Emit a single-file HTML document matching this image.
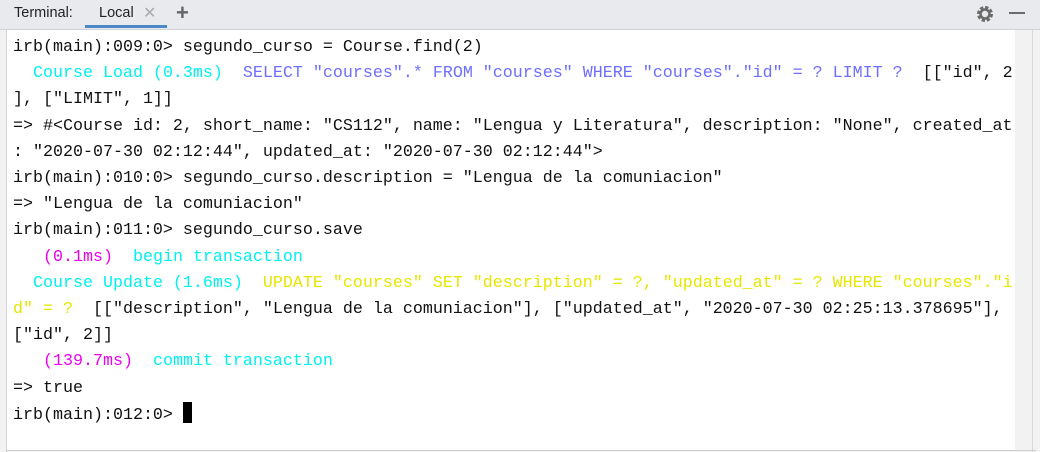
<!DOCTYPE html>
<html><head><meta charset="utf-8"><style>
html,body{margin:0;padding:0;width:1040px;height:452px;overflow:hidden;background:#f2f2f2;font-family:"Liberation Sans",sans-serif}
.hdr{position:absolute;left:0;top:0;width:1040px;height:29px;background:#e8eaee;border-bottom:1px solid #cfd2d6}
.hdr .t{position:absolute;left:14px;top:5px;font-size:14.5px;color:#222}
.hdr .tab{position:absolute;left:99px;top:5px;font-size:14.5px;color:#222}
.hdr .x{position:absolute;left:143px;top:3px;font-size:16px;color:#aaa}
.hdr .ul{position:absolute;left:85px;top:25px;width:82px;height:3px;background:#4a88c7}
.hdr .plus{position:absolute;left:176px;top:0px;font-size:22px;color:#666;font-weight:bold}
.left{position:absolute;left:6px;top:30px;width:1px;height:422px;background:#d4d4d4}
.main{position:absolute;left:7px;top:30px;width:1008px;height:420px;background:#fff}
.sb{position:absolute;left:1032px;top:30px;width:1px;height:422px;background:#d8d8d8}
.bot{position:absolute;left:6px;top:450px;width:1030px;height:1px;background:#d0d0d0}
pre{position:absolute;left:13px;top:35px;margin:0;font-family:"Liberation Mono",monospace;font-size:16.67px;line-height:26.2px;color:#111}
.c{color:#00f0f0}.b{color:#6e6eff}.y{color:#e6e600}.m{color:#f000f0}
.cur{display:inline-block;width:9px;height:21px;background:#000;vertical-align:-4px}
</style></head><body>
<div class="hdr"><span class="t">Terminal:</span><span class="tab">Local</span><span class="x">✕</span><div class="ul"></div><span class="plus">+</span>
<svg style="position:absolute;left:975px;top:4px" width="20" height="20" viewBox="0 0 20 20"><circle cx="10" cy="10" r="6" fill="none" stroke="#6b6b6b" stroke-width="4" stroke-dasharray="3 1.7"/><circle cx="10" cy="10" r="4.5" fill="none" stroke="#6b6b6b" stroke-width="2.5"/></svg>
<div style="position:absolute;left:1009px;top:12px;width:16px;height:2px;background:#6b6b6b"></div>
</div>
<div class="left"></div><div class="main"></div><div class="sb"></div><div class="bot"></div>
<pre>irb(main):009:0&gt; segundo_curso = Course.find(2)
  <span class="c">Course Load (0.3ms)</span>  <span class="b">SELECT "courses".* FROM "courses" WHERE "courses"."id" = ? LIMIT ?</span>  [["id", 2
], ["LIMIT", 1]]
=&gt; #&lt;Course id: 2, short_name: "CS112", name: "Lengua y Literatura", description: "None", created_at
: "2020-07-30 02:12:44", updated_at: "2020-07-30 02:12:44"&gt;
irb(main):010:0&gt; segundo_curso.description = "Lengua de la comuniacion"
=&gt; "Lengua de la comuniacion"
irb(main):011:0&gt; segundo_curso.save
   <span class="m">(0.1ms)</span>  <span class="c">begin transaction</span>
  <span class="c">Course Update (1.6ms)</span>  <span class="y">UPDATE "courses" SET "description" = ?, "updated_at" = ? WHERE "courses"."i
d" = ?</span>  [["description", "Lengua de la comuniacion"], ["updated_at", "2020-07-30 02:25:13.378695"],
["id", 2]]
   <span class="m">(139.7ms)</span>  <span class="c">commit transaction</span>
=&gt; true
irb(main):012:0&gt; <span class="cur"></span></pre>
</body></html>
